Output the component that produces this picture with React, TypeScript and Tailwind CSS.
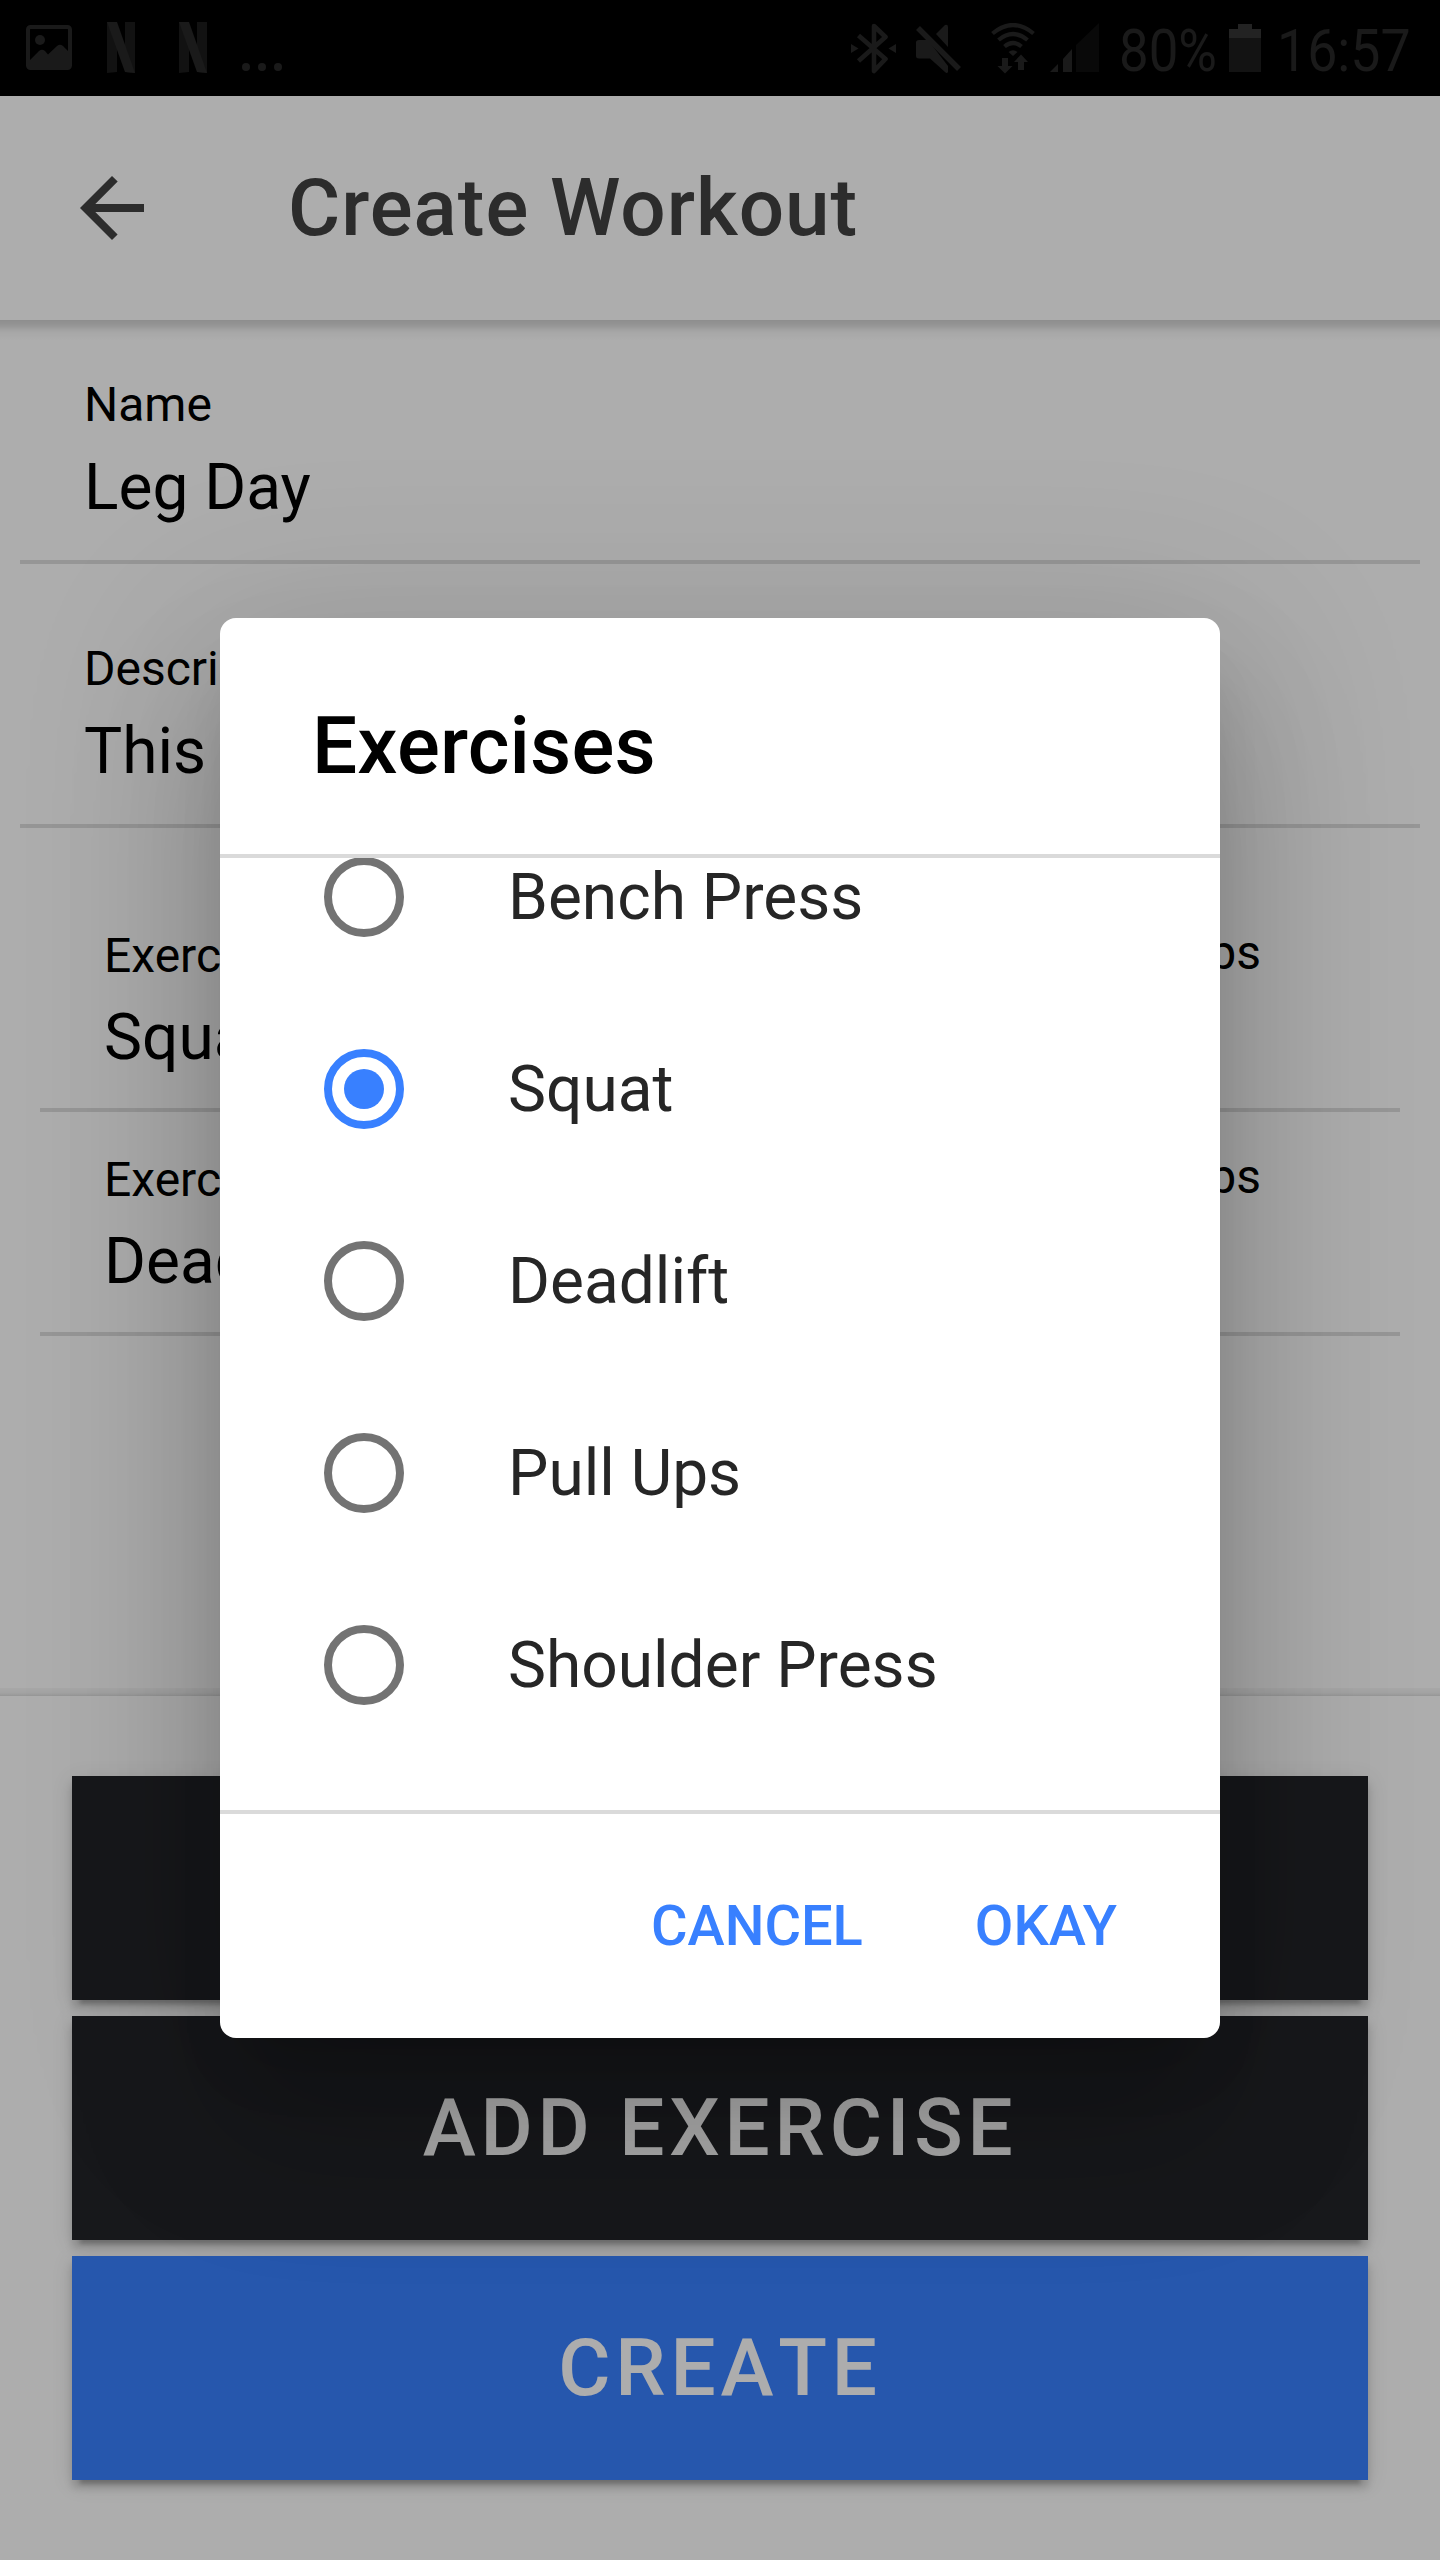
import React from "react";

function PictureIcon() {
  return (
    <svg width="46" height="45" viewBox="0 0 46 45" className="mt-[3px]">
      <rect x="2" y="2" width="42" height="41" rx="2.5" fill="none" stroke="#1a1a1a" strokeWidth="4" />
      <circle cx="14" cy="15" r="5" fill="#1a1a1a" />
      <path d="M3 36 L13 26 Q16 23.500 19 26 L22 29.500 L31 21 Q34 18.500 37 21 L43 27 V42 H3 Z" fill="#1a1a1a" />
    </svg>
  );
}

function NetflixIcon() {
  return (
    <svg width="28" height="51" viewBox="0 0 28 51">
      <path d="M0 0 H10 V50 L0 51 Z M18 0 H28 V51 L18 50 Z" fill="#121212" />
      <path d="M0 0 H10 L28 51 L18 50 Z" fill="#1a1a1a" />
    </svg>
  );
}

function MoreDots() {
  return (
    <svg width="40" height="8" viewBox="0 0 40 8" className="mt-[41px]">
      <circle cx="4" cy="4" r="4" fill="#1a1a1a" />
      <circle cx="20" cy="4" r="4" fill="#1a1a1a" />
      <circle cx="36" cy="4" r="4" fill="#1a1a1a" />
    </svg>
  );
}

function BluetoothIcon() {
  return (
    <svg width="45" height="51" viewBox="0 0 45 51">
      <path d="M7.500 12.500 L34.500 36 L23 48 V3 L34.500 14 L7.500 38" fill="none" stroke="#1a1a1a" strokeWidth="4.600" strokeLinejoin="round" />
      <path d="M0 21 L7.500 25.500 L0 30 Z M45 21 L37.500 25.500 L45 30 Z" fill="#1a1a1a" />
    </svg>
  );
}

function MuteIcon() {
  return (
    <svg width="46" height="50" viewBox="0 0 46 50">
      <path d="M0 18.500 Q0 16 3 16 H12 L32 42 V48 Q31 50 29 48 L14 34.500 H3 Q0 34.500 0 32 Z" fill="#1a1a1a" />
      <path d="M20 10 L29 1 Q32 0 32 3 V23 Z" fill="#1a1a1a" />
      <path d="M5 0 L46 41" stroke="#000" strokeWidth="3" />
      <path d="M2 4 L43 45" stroke="#1a1a1a" strokeWidth="5.500" />
    </svg>
  );
}

function WifiIcon() {
  return (
    <svg width="44" height="51" viewBox="0 0 44 51">
      <g fill="none" stroke="#1a1a1a" strokeWidth="4.200">
        <path d="M1.500 10.500 Q22 -6.500 42.500 10.500" />
        <path d="M7.500 17 Q22 5 36.500 17" />
        <path d="M13.500 23.500 Q22 16.500 30.500 23.500" />
      </g>
      <path d="M17.500 29 Q22 25.500 26.500 29 L22 33 Z" fill="#1a1a1a" />
      <path d="M11 35 H17 V43 H21.500 L14 50.500 L6.500 43 H11 Z" fill="#1a1a1a" />
      <path d="M27 47 H33 V39 H37 L30 31.500 L23 39 H27 Z" fill="#1a1a1a" />
    </svg>
  );
}

function SignalIcon() {
  return (
    <svg width="49" height="49" viewBox="0 0 49 49">
      <path d="M0 49 L8 41 V49 Z M13 36 L22 26 V49 H13 Z" fill="#1a1a1a" />
      <path d="M26 22 L49 0 V49 H26 Z" fill="#090909" />
    </svg>
  );
}

function BatteryIcon() {
  return (
    <svg width="32" height="48" viewBox="0 0 32 48">
      <path d="M9 0 H23 V5 H32 V14 H0 V5 H9 Z" fill="#232323" />
      <rect y="14" width="32" height="34" fill="#131313" />
    </svg>
  );
}

function StatusBar() {
  return (
    <div className="relative flex h-24 items-start bg-black pt-[22px] text-[60px] leading-[60px] text-[#1a1a1a]">
      <div className="ml-[26px] flex items-start">
        <PictureIcon />
        <div className="ml-[35px]"><NetflixIcon /></div>
        <div className="ml-[44px]"><NetflixIcon /></div>
        <div className="ml-[35px]"><MoreDots /></div>
      </div>
      <div className="ml-[569px] flex items-start">
        <div className="mt-px"><BluetoothIcon /></div>
        <div className="mt-[2px] ml-[20px]"><MuteIcon /></div>
        <div className="mt-px ml-[29px]"><WifiIcon /></div>
        <div className="mt-px ml-[15px]"><SignalIcon /></div>
        <div className="-mt-px ml-[20px] w-[110px] origin-left scale-x-[0.88] whitespace-nowrap">80%</div>
        <div className="mt-[2px]"><BatteryIcon /></div>
        <div className="-mt-px ml-[16px] w-[150px] origin-left scale-x-[0.895] whitespace-nowrap">16:57</div>
      </div>
    </div>
  );
}

function Header() {
  return (
    <header className="relative flex h-[224px] items-center bg-white text-[#424242]">
      <svg width="64" height="64" viewBox="0 0 64 64" className="ml-[80px]">
        <path d="M64 28 H15.300 L37.700 5.600 L32 0 L0 32 L32 64 L37.600 58.400 L15.300 36 H64 Z" fill="currentColor" />
      </svg>
      <h1 className="ml-[144px] text-[80px] leading-none font-medium tracking-[0.0125em]">Create Workout</h1>
      <div className="absolute top-full right-0 left-0 h-5 bg-[linear-gradient(to_bottom,rgba(0,0,0,0.18),rgba(0,0,0,0.14)_25%,rgba(0,0,0,0.08)_45%,rgba(0,0,0,0.03)_65%,rgba(0,0,0,0))]" />
    </header>
  );
}

function Field({ label, value, first }: { label: string; value: string; first?: boolean }) {
  return (
    <div className={`mx-5 border-b-4 border-[#dedede] px-16 pb-[32px] ${first ? "pt-[57px]" : "pt-[77px]"}`}>
      <div className="text-[48px] leading-[56px]">{label}</div>
      <div className="mt-[15px] text-[64px] leading-[80px]">{value}</div>
    </div>
  );
}

function ExerciseRow({ value }: { value: string }) {
  return (
    <div className="mx-10 flex justify-between border-b-4 border-[#dedede] pt-10 pr-[139px] pb-[30px] pl-16">
      <div>
        <div className="text-[48px] leading-[56px]">Exercise</div>
        <div className="mt-[14px] text-[64px] leading-[80px]">{value}</div>
      </div>
      <div className="-mt-[3px] text-[48px] leading-[56px]">Reps</div>
    </div>
  );
}

const buttonShadow =
  "shadow-[0_12px_4px_-8px_rgba(0,0,0,0.2),0_8px_8px_0_rgba(0,0,0,0.14),0_4px_20px_0_rgba(0,0,0,0.12)]";

function BlockButton({ label, primary }: { label: string; primary?: boolean }) {
  return (
    <button
      className={`flex h-[224px] w-full shrink-0 items-center justify-center text-[80px] leading-none font-medium tracking-[0.06em] text-white [font-kerning:none] ${buttonShadow} ${primary ? "bg-[#3880ff]" : "bg-[#222428]"}`}
    >
      {label}
    </button>
  );
}

function RadioOption({ label, checked }: { label: string; checked?: boolean }) {
  return (
    <div className="flex h-48 shrink-0 items-center pl-[104px]">
      <span
        className={`flex size-20 items-center justify-center rounded-full border-8 ${checked ? "border-[#3880ff]" : "border-[#737373]"}`}
      >
        {checked && <span className="size-10 rounded-full bg-[#3880ff]" />}
      </span>
      <span className="ml-[104px] pt-[2px] text-[64px] leading-none text-[#262626]">{label}</span>
    </div>
  );
}

const options = ["Bench Press", "Squat", "Deadlift", "Pull Ups", "Shoulder Press"];

function ExercisesDialog() {
  return (
    <div
      role="dialog"
      className="absolute top-[618px] left-[220px] flex h-[1420px] w-[1000px] flex-col overflow-hidden rounded-2xl bg-white shadow-[0_44px_60px_-28px_rgba(0,0,0,0.2),0_96px_152px_12px_rgba(0,0,0,0.14),0_36px_184px_32px_rgba(0,0,0,0.12)]"
    >
      <h2 className="flex h-[236px] shrink-0 items-center px-[92px] pt-[19px] text-[80px] leading-none font-medium tracking-[0.15px]">
        Exercises
      </h2>
      <div className="flex h-[960px] shrink-0 flex-col justify-end overflow-hidden border-y-4 border-[#dadada] pb-[49px]">
        {options.map((name) => (
          <RadioOption key={name} label={name} checked={name === "Squat"} />
        ))}
      </div>
      <div className="flex flex-1 items-center justify-end gap-[112px] pr-[103px] text-[56px] leading-none font-medium text-[#3880ff]">
        <button>CANCEL</button>
        <button>OKAY</button>
      </div>
    </div>
  );
}

export default function App() {
  return (
    <div className="relative h-[2560px] w-[1440px] overflow-hidden bg-white font-['Roboto',sans-serif] text-black">
      <div className="flex h-full flex-col">
        <StatusBar />
        <Header />
        <main className="flex-1">
          <Field label="Name" value="Leg Day" first />
          <Field label="Description" value="This" />
          <div className="mt-[60px]">
            <ExerciseRow value="Squat" />
            <ExerciseRow value="Deadlift" />
          </div>
        </main>
        <footer className="relative flex h-[864px] shrink-0 flex-col gap-4 px-[72px] pt-20">
          <div className="absolute right-0 bottom-full left-0 h-2 bg-[linear-gradient(to_bottom,rgba(0,0,0,0.03),rgba(0,0,0,0.06)_60%,rgba(0,0,0,0.13))]" />
          <BlockButton label="" />
          <BlockButton label="ADD EXERCISE" />
          <BlockButton label="CREATE" primary />
        </footer>
      </div>
      <div className="absolute inset-x-0 top-24 bottom-0 bg-black/32" />
      <div className="absolute inset-x-0 top-24 bottom-0 overflow-hidden">
        <div className="relative -top-24">
          <ExercisesDialog />
        </div>
      </div>
    </div>
  );
}
